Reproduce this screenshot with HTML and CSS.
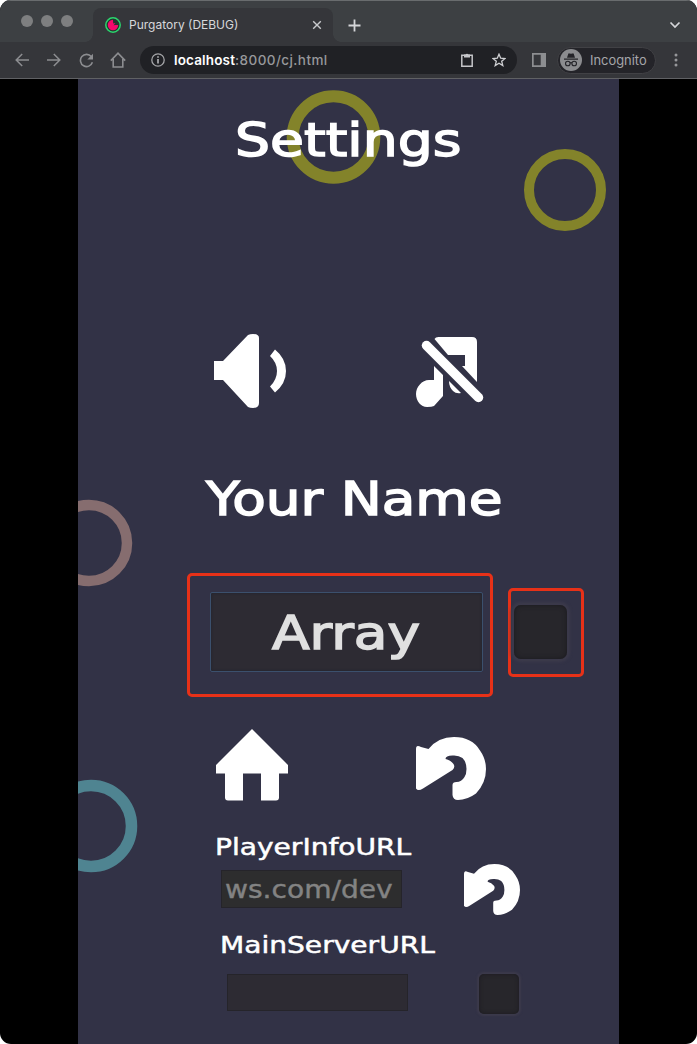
FILE: index.html
```html
<!DOCTYPE html>
<html lang="en">
<head>
<meta charset="utf-8">
<title>Purgatory (DEBUG)</title>
<link rel="stylesheet" href="styles.css">
</head>
<body>
<div class="window">
  <header class="tabstrip">
    <div class="lights"><i></i><i></i><i></i></div>
    <div class="tab">
      <svg class="favicon" width="16" height="16" viewBox="0 0 16 16"><circle cx="8" cy="8" r="7.200" fill="#24372f" stroke="#2bd66e" stroke-width="1.500"/><path d="M8 2.800A5.200 5.200 0 1 0 13.200 8H10.500L8.500 8.200 10.500 6 8.200 6.500Z" fill="#f5086c"/></svg>
      <span class="tab-title">Purgatory (DEBUG)</span>
      <svg width="10" height="10" viewBox="0 0 10 10" fill="none" stroke="#c9cacd" stroke-width="1.400"><path d="M1.200 1.200l7.600 7.600M8.800 1.200L1.200 8.800"/></svg>
    </div>
    <svg class="new-tab" width="13" height="13" viewBox="0 0 13 13" fill="none" stroke="#d5d6d9" stroke-width="1.800"><path d="M6.500 .5v12M.5 6.500h12"/></svg>
    <svg class="chevron" width="12" height="8" viewBox="0 0 12 8" fill="none" stroke="#d5d6d9" stroke-width="1.700"><path d="M1.500 1.500L6 6l4.500-4.500"/></svg>
  </header>
  <nav class="toolbar">
    <svg width="14" height="14" viewBox="0 0 14 14" fill="none" stroke="#8c8d90" stroke-width="1.500"><path d="M14 7H1.200M7.200 1L1.200 7l6 6"/></svg>
    <svg class="forward" width="14" height="14" viewBox="0 0 14 14" fill="none" stroke="#8c8d90" stroke-width="1.500"><path d="M0 7h12.800M6.800 1l6 6-6 6"/></svg>
    <svg class="reload" width="15" height="15" viewBox="0 0 15 15"><path d="M12.300 3.600A6.100 6.100 0 1 0 13.400 9.300" fill="none" stroke="#8c8d90" stroke-width="1.600"/><path d="M14 .8V6.500H8.300Z" fill="#8c8d90"/></svg>
    <svg class="home" width="16" height="16" viewBox="0 0 16 16" fill="none" stroke="#8c8d90" stroke-width="1.600"><path d="M3.200 7v8h9.600V7M.8 8.600L8 1.200l7.200 7.400"/></svg>
    <div class="address">
      <svg width="14" height="14" viewBox="0 0 14 14"><circle cx="7" cy="7" r="6.200" fill="none" stroke="#a5a6a9" stroke-width="1.300"/><path d="M6.200 3.300h1.600v1.500H6.200zM6.200 6h1.600v4.600H6.200z" fill="#b7b8bb"/></svg>
      <span class="url"><b>localhost</b>:8000/cj.html</span>
      <svg class="clip" width="12" height="14" viewBox="0 0 12 14"><path d="M.8 2.300h10.400v10.900H.8z" fill="none" stroke="#c5c6c9" stroke-width="1.500"/><path d="M3 1.600h1.600a1.500 1.500 0 0 1 2.800 0H9v2.800H3z" fill="#c5c6c9"/></svg>
      <svg class="star" width="14" height="14" viewBox="0 0 14 14"><path d="M7 1.200l1.700 4 4.300.3-3.300 2.800 1.100 4.200L7 10.200l-3.800 2.300 1.100-4.200L1 5.500l4.300-.3z" fill="none" stroke="#d0d1d4" stroke-width="1.300"/></svg>
    </div>
    <svg class="panel" width="14" height="14" viewBox="0 0 14 14"><path d="M0 0h14v14H0zM1.700 1.700v10.600h7V1.700z" fill="#8d8e91" fill-rule="evenodd"/></svg>
    <div class="incognito">
      <svg width="22" height="22" viewBox="0 0 22 22"><circle cx="11" cy="11" r="11" fill="#8b8c8f"/><path d="M7 8.700l1.200-3.800q.4-.9 1.300-.5l1.500.4 1.500-.4q.9-.4 1.300.5L15 8.700z" fill="#242429"/><path d="M4 9.500h14v1.200H4z" fill="#242429"/><g fill="none" stroke="#242429" stroke-width="1.100"><circle cx="7.800" cy="14.500" r="2.300"/><circle cx="14.200" cy="14.500" r="2.300"/><path d="M10 14q1-.7 2 0"/></g></svg>
      <span>Incognito</span>
    </div>
    <svg class="dots" width="4" height="14" viewBox="0 0 4 14" fill="#96979a"><circle cx="2" cy="2" r="1.500"/><circle cx="2" cy="7" r="1.500"/><circle cx="2" cy="12" r="1.500"/></svg>
  </nav>

  <main class="game">
    <svg class="rings" width="541" height="965" viewBox="78 79 541 965" fill="none">
      <circle cx="333.500" cy="137" r="40.800" stroke="#83832a" stroke-width="12"/>
      <circle cx="565" cy="190" r="36" stroke="#83832a" stroke-width="10"/>
      <circle cx="89" cy="543" r="38" stroke="#866d6f" stroke-width="10.500"/>
      <circle cx="91" cy="826" r="40.500" stroke="#4f8491" stroke-width="11.500"/>
    </svg>
    <h1 class="title settings">Settings</h1>
    <div class="row audio">
      <svg width="73" height="74" viewBox="214 334 73 74" fill="#fff"><path d="M214 361h9l25-26q2-1 5-1 6 0 6 4v65q0 5-6 5-3 0-5-1l-25-27h-9z"/><path d="M275 349.500q11 9 11 21.500t-11 21.500l-5-6q7-7 7-15.500t-7-15z"/></svg>
      <svg class="music" width="68" height="71" viewBox="416 336 68 71"><path d="M434.500 339q1-2 4-2H472q5 0 5 5v40l-15-16h3v-11h-17z" fill="#fff"/><path d="M434 366l9 9v21l-9 10q-2 1-7 1c-6 0-11-6-11-13s6-14 13-14h5z" fill="#fff"/><path d="M449 381l12 12q-5 1-8-2-4-4-4-10z" fill="#fff"/><path d="M426.500 345.500l52 52" stroke="#fff" stroke-width="9.500" stroke-linecap="round"/></svg>
    </div>
    <h2 class="title name">Your Name</h2>
    <div class="row entry">
      <div class="mark mark-field"><div class="field big"><span class="value">Array</span></div></div>
      <div class="mark mark-check"><div class="check"></div></div>
    </div>
    <div class="row nav">
      <svg width="72" height="72" viewBox="216 728.500 72 72" fill="#fff"><path d="M252 728.500l36 36v8.500h-9v24q0 3-3 3h-15v-27h-18v27h-15q-3 0-3-3v-24h-9v-8.500z"/></svg>
      <svg class="undo" width="70" height="63" viewBox="0 0 70 63"><path d="M0 12q0-5 5-2l7.500 2Q22 0 38 0q18 0 26 13.500Q70 22 70 32q0 14-10 24.500Q51 63 42 63q-5 0-5.500-5V48q0-3 4-3 5 0 8-5 2-3 2-8 0-7-4-11-4-3-10-2.500-7 0-7 3.500 5 1 8 5 2 3-1 6L7 51.500q-5 3-7 0z" fill="#fff"/></svg>
    </div>
    <div class="label player">PlayerInfoURL</div>
    <div class="row player-row">
      <div class="field small"><span class="value">ws.com/dev</span></div>
      <svg class="undo-small" width="56" height="51" viewBox="0 0 70 63" preserveAspectRatio="none"><path d="M0 12q0-5 5-2l7.500 2Q22 0 38 0q18 0 26 13.500Q70 22 70 32q0 14-10 24.500Q51 63 42 63q-5 0-5.500-5V48q0-3 4-3 5 0 8-5 2-3 2-8 0-7-4-11-4-3-10-2.500-7 0-7 3.500 5 1 8 5 2 3-1 6L7 51.500q-5 3-7 0z" fill="#fff"/></svg>
    </div>
    <div class="label server">MainServerURL</div>
    <div class="row server-row">
      <div class="field empty"></div>
      <div class="check check-small"></div>
    </div>
  </main>
</div>
</body>
</html>
```
FILE: styles.css
```css
* { box-sizing: border-box; }
body { margin: 0; background: #fff; }
svg { display: block; flex: none; }
.window { width: 697px; height: 1044px; overflow: hidden; border-radius: 11px; background: #000; font-family: Inter, "Liberation Sans", sans-serif; }

.tabstrip { display: flex; height: 42px; background: #3d4043; border-top: 1px solid #696c6e; }
.lights { display: flex; gap: 8px; padding: 14px 0 0 21px; width: 93px; }
.lights i { width: 12px; height: 12px; border-radius: 50%; background: #7e7f80; }
.tab { position: relative; display: flex; align-items: center; width: 240px; height: 34px; margin-top: 7px; padding: 0 11px 0 12px; background: #35363a; border-radius: 8px 8px 0 0; }
.tab::before, .tab::after { content: ""; position: absolute; bottom: 0; width: 8px; height: 8px; }
.tab::before { left: -8px; background: radial-gradient(circle at 0 0, transparent 7.500px, #35363a 8px); }
.tab::after { right: -8px; background: radial-gradient(circle at 100% 0, transparent 7.500px, #35363a 8px); }
.tab-title { flex: 1; margin-left: 8px; font-size: 12px; line-height: 16px; color: #d7d8db; white-space: nowrap; }
.new-tab { margin: 18px 0 0 15px; }
.chevron { margin: 20px 16px 0 auto; }

.toolbar { display: flex; align-items: center; height: 37px; padding-left: 15px; background: #35363a; border-bottom: 1px solid #606164; }
.forward { margin-left: 18px; }
.reload { margin-left: 18px; }
.home { margin-left: 16px; }
.address { display: flex; align-items: center; width: 377px; height: 28px; margin-left: 14px; padding-left: 11px; border-radius: 14px; background: #202125; }
.url { flex: 1; margin-left: 9px; font-size: 13.500px; font-weight: 500; letter-spacing: .42px; color: #97989b; white-space: nowrap; }
.url b { font-weight: 600; letter-spacing: .15px; color: #fff; }
.star { margin: 0 11px 0 19px; }
.panel { margin-left: 15px; }
.incognito { display: flex; align-items: center; gap: 8px; width: 99px; height: 27px; margin-left: 11px; padding-left: 2px; border: 1px solid #414145; border-radius: 14px; background: #242429; font-size: 12.900px; color: #a5a6a9; }
.dots { margin-left: 18px; }

.game { position: relative; display: flex; flex-direction: column; width: 541px; height: 965px; margin-left: 78px; background: #323246; color: #fff; font-family: "DejaVu Sans", sans-serif; overflow: hidden; }
.rings { position: absolute; inset: 0; }
.game > :not(.rings) { position: relative; }
.row { display: flex; align-items: flex-start; }
.title { align-self: flex-start; margin: 0; height: 60px; font-size: 47px; line-height: 60px; font-weight: 400; white-space: nowrap; -webkit-text-stroke: 1.500px #fff; transform-origin: 0 50%; }
.settings { margin: 31px 0 0 155px; transform: translateX(2px) scaleX(1.175); }
.audio { height: 74px; margin: 164px 0 0 136px; }
.music { margin: 2px 0 0 129px; }
.name { margin: 61px 0 0 128px; transform: scaleX(1.168); }
.entry { height: 124px; margin: 44px 0 0 109px; }
.mark { border: 3px solid #e73118; border-radius: 5px; }
.mark-field { width: 306px; height: 124px; padding: 16px 7px 0 20px; }
.mark-check { width: 76px; height: 89px; margin: 15px 0 0 15px; padding: 14px 0 0 3px; }
.field { background: #2d2b33; white-space: nowrap; }
.value { display: inline-block; transform: scaleX(1.17); transform-origin: 0 50%; }
.big { width: 273px; height: 80px; padding-left: 61px; border: 1px solid #3b506d; border-radius: 2px; box-shadow: inset 0 0 3px #20222c; font-size: 47px; line-height: 79px; color: #e0e0e0; -webkit-text-stroke: 1.500px #e0e0e0; }
.check { width: 53px; height: 54px; border-radius: 7px; background: #27262b; box-shadow: inset 0 0 5px #1a191e, 0 0 3px 3px #3c3a4b; }
.nav { height: 72px; margin: 32px 0 0 138px; }
.undo { margin: 8px 0 0 128px; }
.label { align-self: flex-start; height: 30px; font-size: 23.500px; line-height: 30px; white-space: nowrap; -webkit-text-stroke: .5px #fff; transform: scaleX(1.195); transform-origin: 0 50%; }
.player { margin: 31px 0 0 136.500px; }
.player-row { height: 52px; margin: 2px 0 0 143px; }
.small, .empty { width: 181px; height: 38px; border: 1px solid #25242a; }
.small { margin-top: 6px; padding-left: 3px; background: #2d2d2e; color: #838383; font-size: 24px; line-height: 38px; -webkit-text-stroke: .4px #838383; }
.undo-small { margin-left: 62px; }
.server { margin: 14px 0 0 141.500px; }
.server-row { margin: 14px 0 0 149px; }
.empty { height: 37px; }
.check-small { width: 40px; height: 40px; margin: 0 0 0 71px; border-radius: 5px; box-shadow: inset 0 0 4px #1c1b21, 0 0 2px 2px #3c3a4b; }
```
